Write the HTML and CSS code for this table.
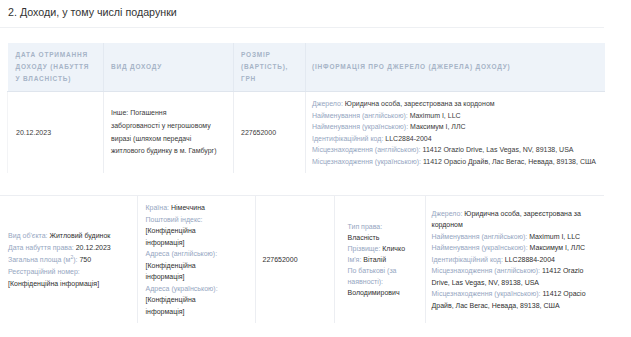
FILE: index.html
```html
<!DOCTYPE html>
<html lang="uk">
<head>
<meta charset="utf-8">
<title>Доходи</title>
<link rel="stylesheet" href="styles.css">
</head>
<body>
<div class="page">
  <h2 class="title">2. Доходи, у тому числі подарунки</h2>

  <table class="t1">
    <colgroup>
      <col class="c1"><col class="c2"><col class="c3"><col class="c4">
    </colgroup>
    <thead>
      <tr>
        <th class="h-date">Дата отримання доходу (набуття у власність)</th>
        <th>Вид доходу</th>
        <th>Розмір (вартість), грн</th>
        <th>(Інформація про джерело (джерела) доходу)</th>
      </tr>
    </thead>
    <tbody>
      <tr>
        <td>20.12.2023</td>
        <td class="kind">Інше: Погашення<br>заборгованості у негрошовому виразі (шляхом передачі житлового будинку в м. Гамбург)</td>
        <td>227652000</td>
        <td class="info">
          <div><span class="lbl">Джерело:</span> Юридична особа, зареєстрована за кордоном</div>
          <div><span class="lbl">Найменування (англійською):</span> Maximum I, LLC</div>
          <div><span class="lbl">Найменування (українською):</span> Максимум І, ЛЛС</div>
          <div><span class="lbl">Ідентифікаційний код:</span> LLC2884-2004</div>
          <div><span class="lbl">Місцезнаходження (англійською):</span> 11412 Orazio Drive, Las Vegas, NV, 89138, USA</div>
          <div><span class="lbl">Місцезнаходження (українською):</span> 11412 Орасіо Драйв, Лас Вегас, Невада, 89138, США</div>
        </td>
      </tr>
    </tbody>
  </table>

  <table class="t2">
    <colgroup>
      <col class="d1"><col class="d2"><col class="d3"><col class="d4"><col class="d5">
    </colgroup>
    <tbody>
      <tr>
        <td class="obj">
          <div><span class="lbl">Вид об'єкта:</span> Житловий будинок</div>
          <div><span class="lbl">Дата набуття права:</span> 20.12.2023</div>
          <div><span class="lbl">Загальна площа (м<sup>2</sup>):</span> 750</div>
          <div><span class="lbl">Реєстраційний номер:</span></div>
          <div>[Конфіденційна інформація]</div>
        </td>
        <td class="addr">
          <div><span class="lbl">Країна:</span> Німеччина</div>
          <div><span class="lbl">Поштовий індекс:</span> [Конфіденційна інформація]</div>
          <div><span class="lbl">Адреса (англійською):</span> [Конфіденційна інформація]</div>
          <div><span class="lbl">Адреса (українською):</span> [Конфіденційна інформація]</div>
        </td>
        <td class="sum">227652000</td>
        <td class="owner">
          <div><span class="lbl">Тип права:</span> Власність</div>
          <div><span class="lbl">Прізвище:</span> Кличко</div>
          <div><span class="lbl">Ім'я:</span> Віталій</div>
          <div><span class="lbl">По батькові (за наявності):</span> Володимирович</div>
        </td>
        <td class="src">
          <div><span class="lbl">Джерело:</span> Юридична особа, зареєстрована за кордоном</div>
          <div><span class="lbl">Найменування (англійською):</span> Maximum I, LLC</div>
          <div><span class="lbl">Найменування (українською):</span> Максимум І, ЛЛС</div>
          <div><span class="lbl">Ідентифікаційний код:</span> LLC28884-2004</div>
          <div><span class="lbl">Місцезнаходження (англійською):</span> 11412 Orazio Drive, Las Vegas, NV, 89138, USA</div>
          <div><span class="lbl">Місцезнаходження (українською):</span> 11412 Орасіо Драйв, Лас Вегас, Невада, 89138, США</div>
        </td>
      </tr>
    </tbody>
  </table>
</div>
</body>
</html>
```

FILE: styles.css
```css
html, body {
  margin: 0;
  padding: 0;
  background: #ffffff;
}

body {
  font-family: "Liberation Sans", Arial, sans-serif;
  color: #333333;
}

.page {
  width: 604px;
}

.title {
  margin: 0;
  padding: 5px 8px 8px;
  font-size: 10.7px;
  line-height: 14px;
  font-weight: normal;
  color: #333333;
  border-bottom: 1px solid #eef0f3;
}

table {
  border-collapse: collapse;
  table-layout: fixed;
}

.t1 {
  margin: 15px 0 0 7px;
  width: 597px;
}

.t1 .c1 { width: 96px; }
.t1 .c2 { width: 130px; }
.t1 .c3 { width: 72px; }
.t1 .c4 { width: 299px; }

.t1 th {
  background: #eef3f9;
  color: #a6b3c7;
  font-size: 6.5px;
  font-weight: bold;
  letter-spacing: 0.8px;
  text-transform: uppercase;
  text-align: left;
  line-height: 12px;
  padding: 6px 7px;
  vertical-align: middle;
  border-right: 1px solid #e3e9f1;
  border-bottom: 1px solid #dfe5ed;
}

.t1 th.h-date {
  padding-left: 8px;
  padding-right: 10px;
}

.t1 th:last-child {
  border-right: none;
  padding-left: 6px;
}

.t1 td {
  font-size: 7px;
  line-height: 11.5px;
  padding: 6px 7px;
  vertical-align: middle;
  color: #3a3a3a;
  border-right: 1px solid #eceef2;
}

.t1 td:first-child {
  border-left: 1px solid #f3f4f6;
  padding-left: 8px;
}

.t1 td:last-child {
  border-right: none;
  padding-left: 6px;
}

.t1 td.kind {
  line-height: 12.6px;
  padding-right: 12px;
}

.lbl {
  color: #95a6c1;
}

.t2 {
  margin-top: 22px;
  width: 604px;
  border-top: 1px solid #eceef2;
}

.t2 .d1 { width: 137px; }
.t2 .d2 { width: 118px; }
.t2 .d3 { width: 79px; }
.t2 .d4 { width: 91px; }
.t2 .d5 { width: 179px; }

.t2 td {
  font-size: 7px;
  line-height: 11.5px;
  padding: 6px 8px;
  vertical-align: middle;
  color: #2f2f2f;
  border-right: 1px solid #eceef2;
}

.t2 td:last-child {
  border-right: none;
}

.t2 td.obj {
  line-height: 12px;
}

.t2 td.addr {
  padding-right: 30px;
}

.t2 td.sum {
  padding-left: 7px;
}

.t2 td.owner {
  padding-left: 13px;
  padding-right: 14px;
  line-height: 11px;
}

.t2 td.src {
  padding-left: 6px;
  padding-right: 12px;
}

sup {
  font-size: 5px;
  line-height: 0;
  vertical-align: super;
}
```
